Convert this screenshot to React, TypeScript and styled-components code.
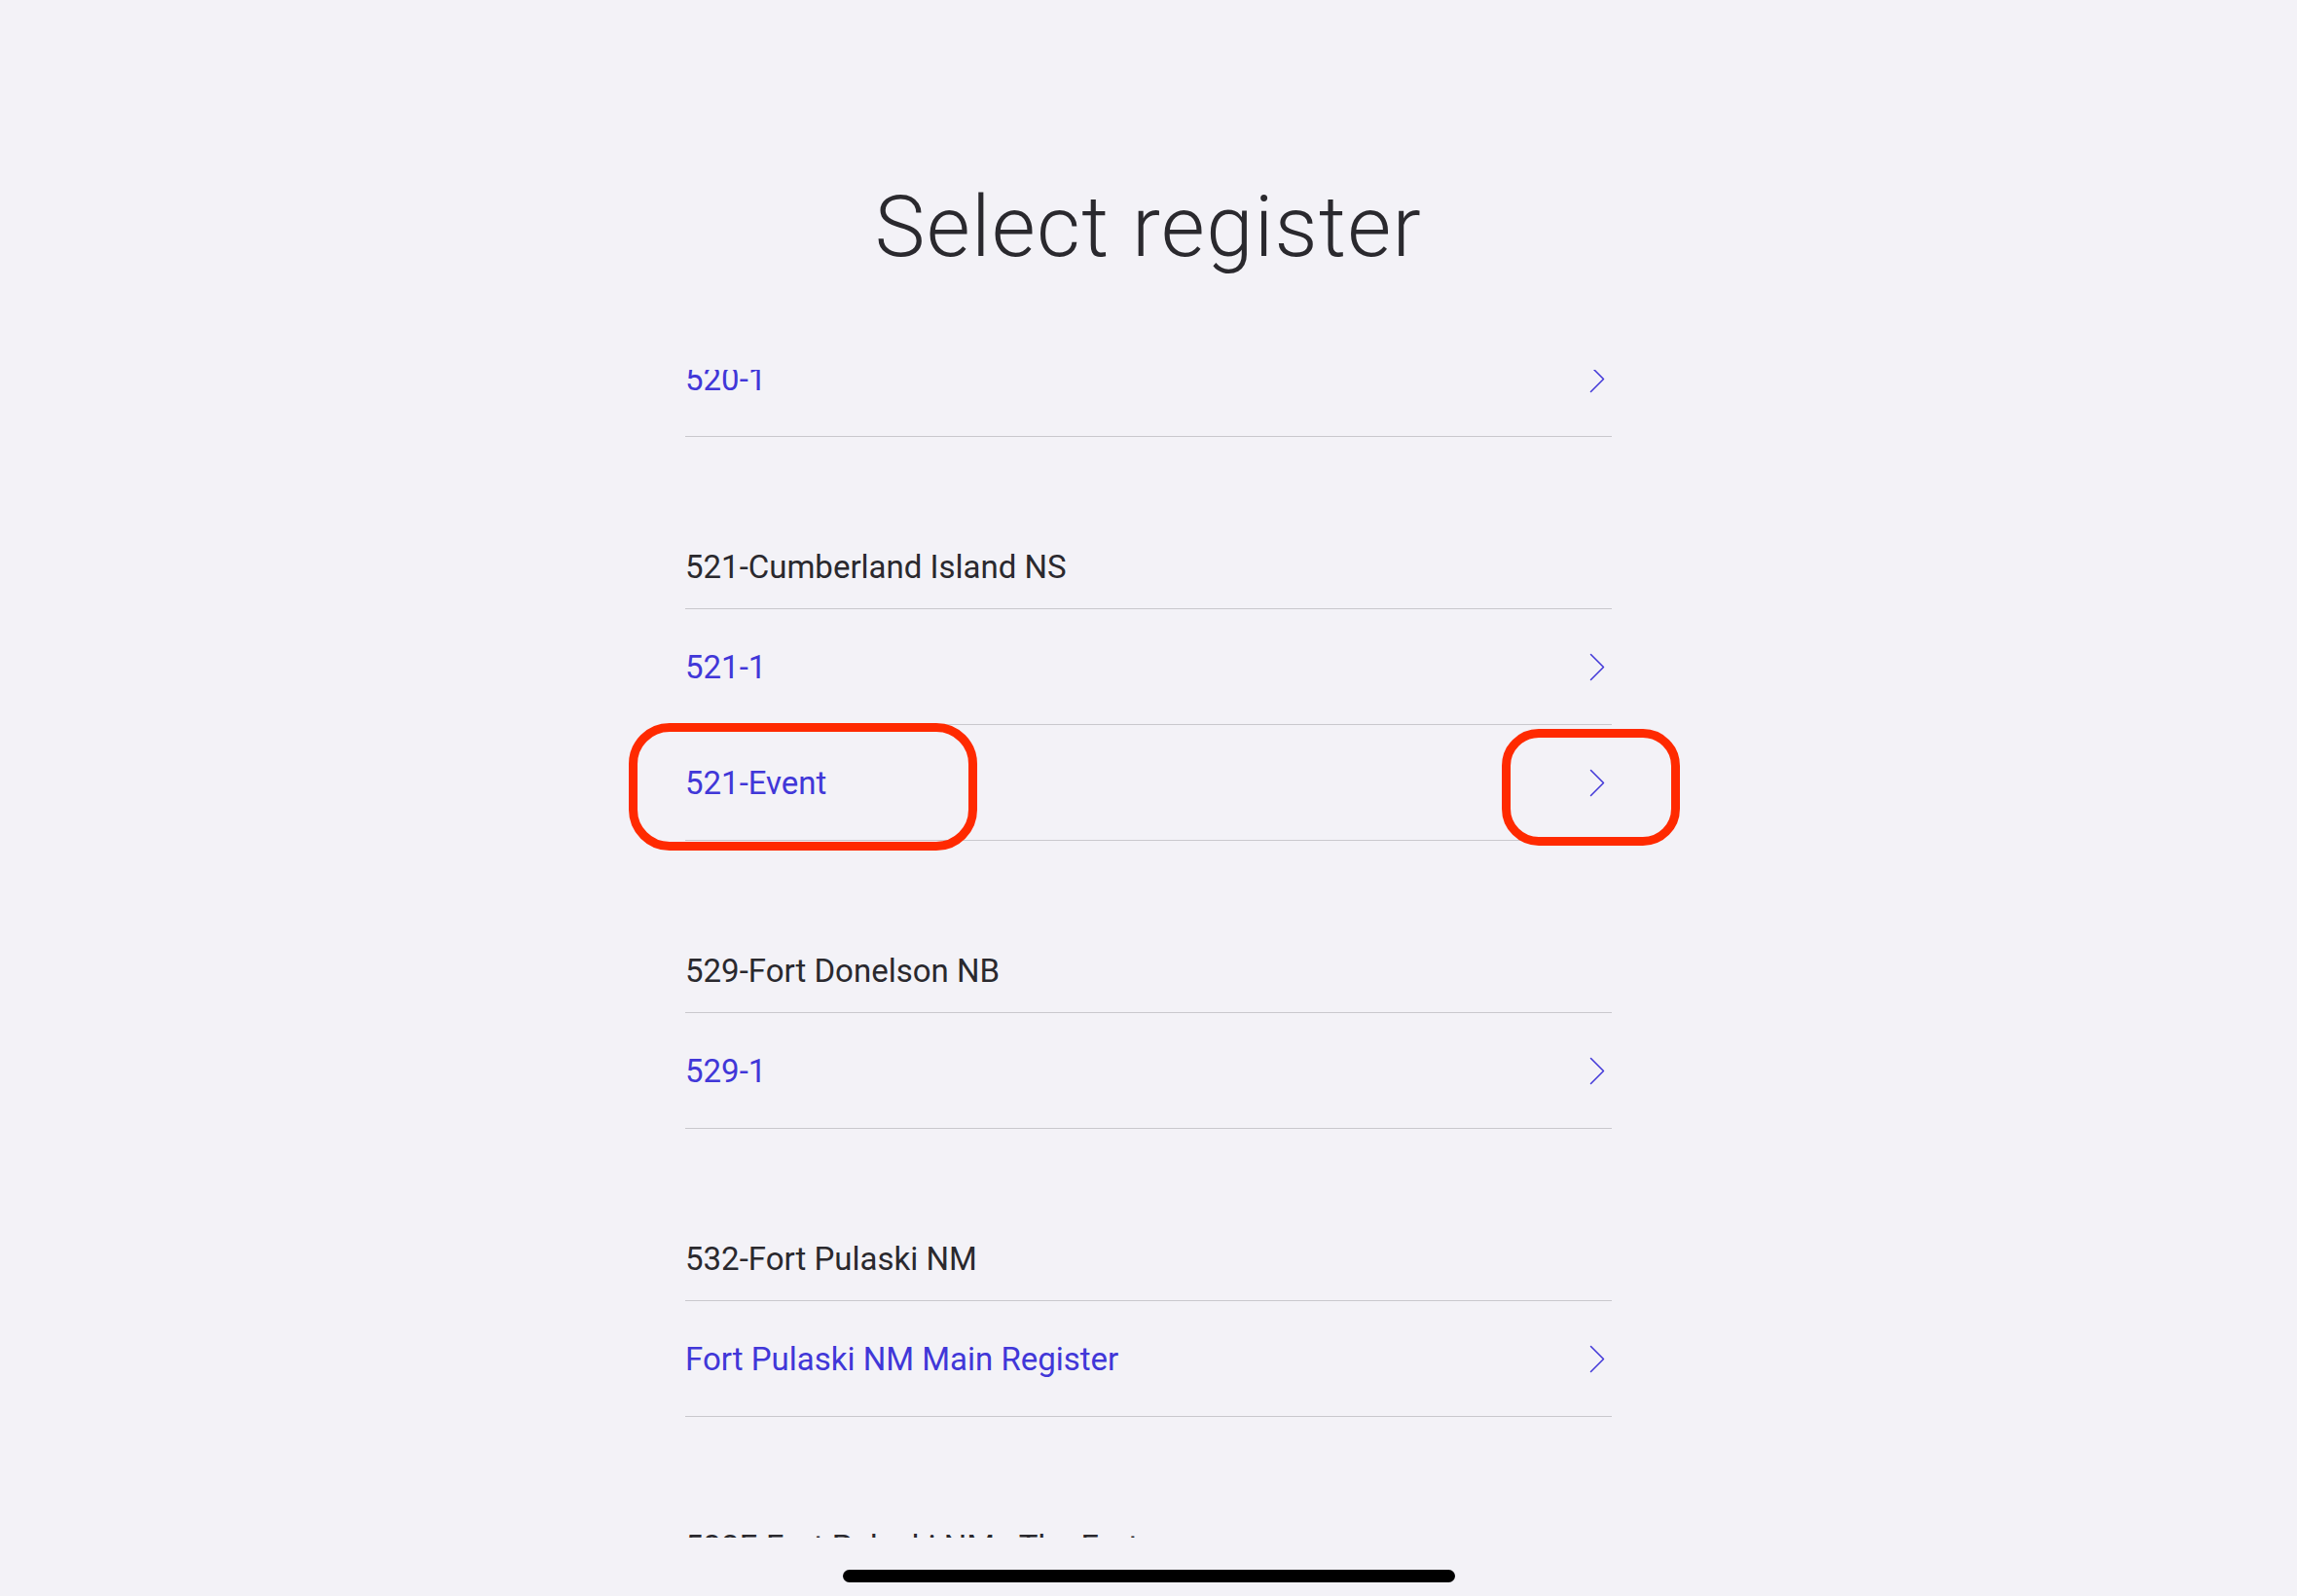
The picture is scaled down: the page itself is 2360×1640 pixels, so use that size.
import React from "react";
import styled, { createGlobalStyle } from "styled-components";

interface RegisterItem {
  kind: "item";
  label: string;
  marked?: boolean;
}

interface RegisterGroup {
  kind: "group";
  label: string;
}

type Row = RegisterItem | RegisterGroup;

const rows: Row[] = [
  { kind: "item", label: "520-1" },
  { kind: "group", label: "521-Cumberland Island NS" },
  { kind: "item", label: "521-1" },
  { kind: "item", label: "521-Event", marked: true },
  { kind: "group", label: "529-Fort Donelson NB" },
  { kind: "item", label: "529-1" },
  { kind: "group", label: "532-Fort Pulaski NM" },
  { kind: "item", label: "Fort Pulaski NM Main Register" },
  { kind: "group", label: "532F-Fort Pulaski NM - The Fort" },
];

const GlobalStyle = createGlobalStyle`
  html, body {
    margin: 0;
    padding: 0;
    background: #f3f2f7;
  }
  body {
    font-family: Roboto, "Liberation Sans", sans-serif;
    -webkit-font-smoothing: antialiased;
  }
`;

const Screen = styled.div`
  position: relative;
  width: 2360px;
  height: 1640px;
  display: flex;
  flex-direction: column;
  align-items: center;
  background: #f3f2f7;
  overflow: hidden;
`;

const Title = styled.h1`
  margin: 190px 0 0;
  font-size: 87px;
  line-height: 1;
  font-weight: 300;
  color: #2a292e;
  letter-spacing: 1.3px;
`;

// scroll area; side padding leaves room for the red marks
const ListViewport = styled.div`
  margin-top: 103px;
  height: 1200px;
  width: 952px;
  padding: 0 80px;
  overflow: hidden;
`;

const ListInner = styled.div`
  margin-top: -50px;
  display: flex;
  flex-direction: column;
`;

const GroupRow = styled.div`
  box-sizing: border-box;
  height: 177px;
  display: flex;
  align-items: flex-end;
  padding-bottom: 26px;
  border-bottom: 1px solid #c9c8cd;
  font-size: 33px;
  line-height: 1;
  color: #2a292e;
`;

const ItemRow = styled.div`
  position: relative;
  box-sizing: border-box;
  height: 119px;
  display: flex;
  align-items: center;
  justify-content: space-between;
  border-bottom: 1px solid #c9c8cd;
  font-size: 33px;
  line-height: 1;
  color: #4137d8;
`;

const Chevron = styled.svg`
  width: 16px;
  height: 29px;
  margin-right: 7px;
  flex: none;
`;

const Mark = styled.div<{ $left: number; $top: number; $w: number; $h: number; $r: number }>`
  position: absolute;
  left: ${({ $left }) => $left}px;
  top: ${({ $top }) => $top}px;
  width: ${({ $w }) => $w}px;
  height: ${({ $h }) => $h}px;
  box-sizing: border-box;
  border: 9px solid #ff2a00;
  border-radius: ${({ $r }) => $r}px;
  pointer-events: none;
`;

const HomeIndicator = styled.div`
  position: absolute;
  left: 50%;
  bottom: 14px;
  width: 629px;
  height: 13px;
  margin-left: -314px;
  border-radius: 7px;
  background: #000;
`;

const ChevronIcon = () => (
  <Chevron viewBox="0 0 16 29">
    <polyline
      points="1.5,1.5 14.5,14.5 1.5,27.5"
      fill="none"
      stroke="#4137d8"
      strokeWidth="1.5"
      strokeLinecap="round"
      strokeLinejoin="round"
    />
  </Chevron>
);

export default function App() {
  return (
    <Screen>
      <GlobalStyle />
      <Title>Select register</Title>
      <ListViewport>
        <ListInner>
          {rows.map((row, i) =>
            row.kind === "group" ? (
              <GroupRow key={i}>{row.label}</GroupRow>
            ) : (
              <ItemRow key={i}>
                <span>{row.label}</span>
                <ChevronIcon />
                {row.marked && (
                  <>
                    <Mark $left={-58} $top={-2} $w={358} $h={131} $r={42} />
                    <Mark $left={839} $top={4} $w={183} $h={120} $r={38} />
                  </>
                )}
              </ItemRow>
            )
          )}
        </ListInner>
      </ListViewport>
      <HomeIndicator />
    </Screen>
  );
}
